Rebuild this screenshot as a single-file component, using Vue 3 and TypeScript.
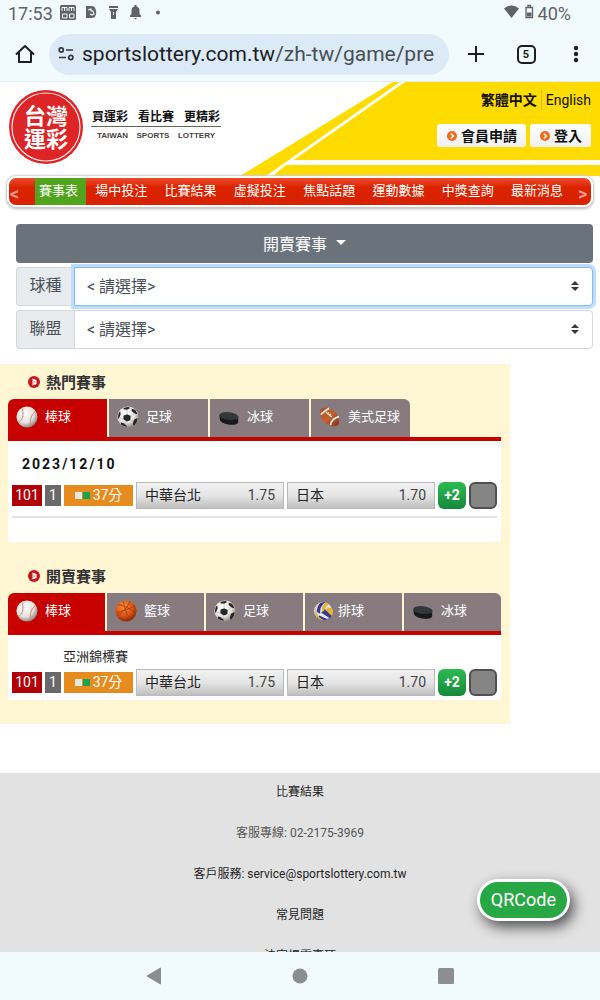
<script setup lang="ts">
import { ref } from 'vue'

interface Tab { icon: string; label: string }
interface Board { title: string; kind: string; date?: string; league?: string; tabs: Tab[] }

const menu = ['賽事表', '場中投注', '比賽結果', '虛擬投注', '焦點話題', '運動數據', '中獎查詢', '最新消息']
const sport = ref('')
const league = ref('')

const boards: Board[] = [
  {
    title: '熱門賽事',
    kind: 'hot',
    date: '2023/12/10',
    tabs: [
      { icon: 'baseball', label: '棒球' },
      { icon: 'soccer', label: '足球' },
      { icon: 'puck', label: '冰球' },
      { icon: 'football', label: '美式足球' },
    ],
  },
  {
    title: '開賣賽事',
    kind: 'open',
    league: '亞洲錦標賽',
    tabs: [
      { icon: 'baseball', label: '棒球' },
      { icon: 'basketball', label: '籃球' },
      { icon: 'soccer', label: '足球' },
      { icon: 'volleyball', label: '排球' },
      { icon: 'puck', label: '冰球' },
    ],
  },
]
const teams = [
  { name: '中華台北', odds: '1.75' },
  { name: '日本', odds: '1.70' },
]
</script>

<template>
  <div class="screen">
    <svg class="sprite" aria-hidden="true">
      <defs>
        <radialGradient id="g-white" cx="0.4" cy="0.35" r="0.65">
          <stop offset="0" stop-color="#fff" /><stop offset="0.65" stop-color="#e6e2dc" /><stop offset="1" stop-color="#8f8a88" />
        </radialGradient>
        <radialGradient id="g-orange" cx="0.4" cy="0.3" r="0.7">
          <stop offset="0" stop-color="#ff8a35" /><stop offset="0.6" stop-color="#df5312" /><stop offset="1" stop-color="#8a2c05" />
        </radialGradient>
        <linearGradient id="g-brown" x1="0" y1="0" x2="1" y2="1">
          <stop offset="0" stop-color="#a8522c" /><stop offset="0.5" stop-color="#c4602f" /><stop offset="1" stop-color="#82351a" />
        </linearGradient>
        <clipPath id="c-ball"><circle cx="12" cy="12" r="11" /></clipPath>
        <clipPath id="c-volley"><circle cx="12" cy="12" r="10" /></clipPath>
      </defs>
      <symbol id="baseball" viewBox="0 0 24 24">
        <circle cx="12" cy="12" r="11.500" fill="url(#g-white)" />
        <path d="M6.500 2.500C9 9 7 16 2.500 18M21.500 6C16.500 9 14.500 16 16.500 22" fill="none" stroke="#c8897f" stroke-width="1" />
        <path d="M6.500 5l2.500-.8M7 8l2.500-.2M6.500 11l2.500.6M5.200 14l2.300 1.200M17 9l1.800 1.800M15.500 12l2 1.200M14.800 15l2.200.8M14.800 18l2.200.3" stroke="#d9a59c" stroke-width="0.8" />
      </symbol>
      <symbol id="soccer" viewBox="0 0 24 24">
        <circle cx="12" cy="12" r="11.500" fill="url(#g-white)" />
        <g clip-path="url(#c-ball)">
          <path d="M7 10.500l4-1.500 4 2-.5 4.500-4 1.500-3.500-2.500zM7 1l6-1 1 2.500-3 1.500-4-.5zM16 3l4 1 2.500 5-3-.5-3.500-3zM1 8l2.500-2 .5 3-2 4.500-3 .5zM18.500 15l4-2-1 7-4 1.500v-3.500zM4.500 18l3 .8L11 22l-2 2-5-3z" fill="#25252a" />
          <path d="M11 9l0-5M15 11l4-3M14.500 15.500l4 1M10.500 17l-2 3M7 14.500l-5-1.500" stroke="#b5b5b5" stroke-width="0.7" />
        </g>
      </symbol>
      <symbol id="puck" viewBox="0 0 24 24">
        <path d="M1.500 9.500L2 15c1 5 18 8 20 3V11.500z" fill="#17191a" />
        <ellipse cx="12" cy="11" rx="10.500" ry="4.200" transform="rotate(7 12 11)" fill="#34373a" />
      </symbol>
      <symbol id="football" viewBox="0 0 24 24">
        <path d="M1.500 4c3-4 11-2.500 15 1.500s7 11.500 4.500 15.500c-5 2.500-12 .5-15.500-3.500S0 9 1.500 4z" fill="url(#g-brown)" />
        <path d="M2 9.500C3.500 8 6.500 5 11 2.500M12.500 21C13 16.500 17 12.500 21.800 11.500" fill="none" stroke="#f6eee9" stroke-width="1.900" />
        <path d="M7.500 6.500l6.500 5.500M9 9l2-2M11 10.500l2-2" stroke="#f3ddd2" stroke-width="1.200" />
      </symbol>
      <symbol id="basketball" viewBox="0 0 24 24">
        <circle cx="12" cy="12" r="11.500" fill="url(#g-orange)" />
        <path d="M1.500 14C8 12 18 9 21.500 6M9 1.500c1 7 4 15 8 20M3.500 5c6 1 14 5 19 9M2.500 17c5-3 12-9 13.500-15.500" fill="none" stroke="#8c3c12" stroke-width="0.8" />
      </symbol>
      <symbol id="volleyball" viewBox="0 0 24 24">
        <circle cx="11" cy="12" r="9.800" fill="#e8e8ee" />
        <g clip-path="url(#c-volley)">
          <path d="M8 3l6-1c-5 4-7 8-6 13l-4-2C4 9 6 5 8 3zM12 9l10 9-2 3-11-7zM7 17l9 4-7 2-5-4z" fill="#373992" />
          <path d="M14 3l5 1c-3 1-6 4-7 8l-2 1c-1-5 1-8 4-10zM16 8l5 1 2 6-2 3-7-7zM2 11l5 8 5 3-7 1-5-8z" fill="#e6b52c" />
          <path d="M4 5l3-2c-2 2-4 6-4 9l-2 1z" fill="#e6b52c" />
        </g>
      </symbol>
    </svg>

    <div class="status">
      <span>17:53</span>
      <svg class="tray" width="106" height="18" viewBox="0 0 106 18" aria-hidden="true">
        <rect x="0" y="2" width="16" height="15" rx="1.500" fill="#5f6365" />
        <path d="M2 8V4.500h5V8M4.500 4.500V8M9 8V4.500h5V8M11.500 4.500V8M2.500 11H7v4H2.500zM9.500 11H14v4H9.500z" fill="none" stroke="#f1fafd" stroke-width="1" />
        <path d="M26 3h6c5 0 6 12 0 12h-6z" fill="#5f6365" />
        <path d="M28 7l3-1v2h2l1 3-2 1-2-1" fill="none" stroke="#f1fafd" stroke-width="1.200" />
        <path d="M49 3h9v2h-9zM49 6h9l-2 3v7h-5V9z" fill="#5f6365" /><path d="M53.500 9v3" stroke="#f1fafd" />
        <path d="M70 14v-1.500l1.500-1.500V8c0-2.500 1-4 3-4.500V2h2v1.500c2 .5 3 2 3 4.500v3l1.500 1.500V14zM74 15h3l-1.500 1.500z" fill="#5f6365" />
        <circle cx="98" cy="9.500" r="2" fill="#5f6365" />
      </svg>
      <svg class="signal" width="30" height="18" viewBox="0 0 30 18" aria-hidden="true">
        <path d="M0 5.500Q7.500-.5 15 5.500L7.500 15z" fill="#5f6365" />
        <path d="M22 4.500h6.500v10H22zM24 2.500h2.500v2H24z" fill="none" stroke="#5f6365" stroke-width="1.300" /><path d="M23 9.500h4.500v4H23z" fill="#5f6365" />
      </svg>
      <span>40%</span>
    </div>

    <div class="browser">
      <button class="tool home" aria-label="首頁">
        <svg width="20" height="20" viewBox="0 0 20 20"><path d="M1 10.500L10 2l9 8.500M4 8.500V18h12V8.500" fill="none" stroke="#1b1f22" stroke-width="2" stroke-linejoin="round" /></svg>
      </button>
      <button class="address">
        <svg width="16" height="14" viewBox="0 0 16 14" aria-hidden="true"><g fill="none" stroke="#30373b" stroke-width="1.700"><circle cx="3.200" cy="3" r="2.100" /><path d="M8 3h7M1 10.500h7" /><circle cx="12.800" cy="10.500" r="2.100" /></g></svg>
        <span class="url">sportslottery.com.tw<i>/zh-tw/game/pre</i></span>
      </button>
      <button class="tool" aria-label="新增分頁">
        <svg width="18" height="18" viewBox="0 0 18 18"><path d="M9 1v16M1 9h16" stroke="#1b1f22" stroke-width="2" /></svg>
      </button>
      <button class="tool"><span class="count">5</span></button>
      <button class="tool dots" aria-label="選單">
        <svg width="6" height="18" viewBox="0 0 6 18"><g fill="#1b1f22"><circle cx="3" cy="3" r="2.200" /><circle cx="3" cy="9" r="2.200" /><circle cx="3" cy="15" r="2.200" /></g></svg>
      </button>
    </div>

    <main class="page">
      <header class="head">
        <svg class="banner" width="360" height="94" viewBox="240 0 360 94" aria-hidden="true">
          <path d="M240 94L393 0H600V94z" fill="#ffdc00" />
          <path d="M266 94L400 0H405L285 84Q279 88 273 94z" fill="#fff" />
          <path d="M292 78H600V83H284z" fill="#fff" />
        </svg>
        <a class="brand" href="#">
          <svg width="74" height="74" viewBox="0 0 74 74" role="img" aria-label="台灣運彩">
            <circle cx="37" cy="37" r="37" fill="#dd2427" />
            <circle cx="37" cy="37" r="34" fill="none" stroke="#fbe3e1" stroke-width="1.200" />
            <g class="seal"><text x="37" y="34">台灣</text><text x="37" y="57">運彩</text></g>
          </svg>
          <span class="motto">
            <span class="zh"><b>買運彩</b><b>看比賽</b><b>更精彩</b></span>
            <span class="en"><b>TAIWAN</b><b>SPORTS</b><b>LOTTERY</b></span>
          </span>
        </a>
        <div class="account">
          <div class="lang"><a class="now" href="#">繁體中文</a><a href="#">English</a></div>
          <div class="entry">
            <button v-for="t in ['會員申請', '登入']" :key="t">
              <svg width="10" height="10" viewBox="0 0 10 10" aria-hidden="true"><circle cx="5" cy="5" r="5" fill="#f26a1b" /><path d="M3.800 2.500L6.300 5 3.800 7.500" fill="none" stroke="#fff" stroke-width="1.500" /></svg>{{ t }}
            </button>
          </div>
        </div>
      </header>

      <nav class="menu">
        <button class="arrow">&lt;</button>
        <div class="links">
          <a v-for="(m, i) in menu" :key="m" href="#" :class="{ on: i === 0 }">{{ m }}</a>
        </div>
        <button class="arrow end">&gt;</button>
      </nav>

      <section class="filter">
        <button class="drop">開賣賽事<span class="tri"></span></button>
        <div class="group">
          <label for="sport">球種</label>
          <div class="pick focus">
            <select id="sport" v-model="sport"><option value="">&lt; 請選擇&gt;</option></select>
            <svg width="8" height="10" viewBox="0 0 8 10" aria-hidden="true"><path d="M4 0l4 4H0zM4 10l4-4H0z" fill="#343a40" /></svg>
          </div>
        </div>
        <div class="group">
          <label for="league">聯盟</label>
          <div class="pick">
            <select id="league" v-model="league"><option value="">&lt; 請選擇&gt;</option></select>
            <svg width="8" height="10" viewBox="0 0 8 10" aria-hidden="true"><path d="M4 0l4 4H0zM4 10l4-4H0z" fill="#343a40" /></svg>
          </div>
        </div>
      </section>

      <div class="boards">
        <section v-for="b in boards" :key="b.kind" class="board" :class="b.kind">
          <h2>
            <svg width="12" height="12" viewBox="0 0 12 12" aria-hidden="true"><circle cx="6" cy="6" r="6" fill="#c8161d" /><path d="M4.500 2.500L8.500 4v4l-4 1.500z" fill="#fff" /><path d="M5.500 4.500L7.500 6l-2 1.500z" fill="#e88" /></svg>{{ b.title }}
          </h2>
          <div class="tabs">
            <button v-for="(t, i) in b.tabs" :key="t.label" :class="[t.icon, { on: i === 0 }]">
              <svg aria-hidden="true"><use :href="'#' + t.icon" /></svg>{{ t.label }}
            </button>
          </div>
          <div class="panel">
            <h3 v-if="b.date">{{ b.date }}</h3>
            <p v-if="b.league" class="league">{{ b.league }}</p>
            <div class="match">
              <span class="no">101</span>
              <span class="min">1</span>
              <span class="time"><i></i><i class="green"></i>37分</span>
              <button v-for="t in teams" :key="t.name" class="odds"><span>{{ t.name }}</span><span class="val">{{ t.odds }}</span></button>
              <button class="more">+2</button>
              <button class="info" aria-label="資訊"></button>
            </div>
          </div>
        </section>
      </div>

      <footer class="foot">
        <a href="#">比賽結果</a>
        <p>客服專線: 02-2175-3969</p>
        <a href="#">客戶服務: service@sportslottery.com.tw</a>
        <a href="#">常見問題</a>
        <a href="#">法定揭露事項</a>
      </footer>
      <button class="qr">QRCode</button>
    </main>

    <div class="keys">
      <button aria-label="返回"><svg width="16" height="18" viewBox="0 0 16 18"><path d="M14.500 1v16L1 9z" fill="#8b8f90" stroke="#8b8f90" stroke-linejoin="round" /></svg></button>
      <button aria-label="主畫面"><svg width="16" height="16" viewBox="0 0 16 16"><circle cx="8" cy="8" r="7.500" fill="#8b8f90" /></svg></button>
      <button aria-label="最近使用"><svg width="16" height="16" viewBox="0 0 16 16"><rect width="16" height="16" rx="1.500" fill="#8b8f90" /></svg></button>
    </div>
  </div>
</template>

<style>
body { margin: 0; background: #fff; }
</style>

<style scoped>
* { box-sizing: border-box; }
.screen {
  display: flex;
  flex-direction: column;
  height: 100vh;
  overflow: hidden;
  background: #f1fafd;
  color: #222;
  font-family: Roboto, "Noto Sans CJK TC", sans-serif;
}
.sprite { position: absolute; width: 0; height: 0; }
svg { display: block; flex: none; }
button { padding: 0; border: 0; background: none; color: inherit; font: inherit; cursor: pointer; }
a { color: inherit; text-decoration: none; }
h2, h3, p { margin: 0; }

.status {
  display: flex;
  align-items: center;
  flex: none;
  height: 27px;
  padding: 0 29px 0 8px;
  color: #5f6365;
  font-size: 18px;
  line-height: 27px;
}
.tray { margin-left: 7px; margin-bottom: 4px; }
.signal { margin: 0 4px 4px auto; }

.browser {
  display: flex;
  align-items: center;
  flex: none;
  height: 54px;
}
.tool { display: flex; align-items: center; justify-content: center; width: 50px; height: 40px; }
.home { width: 49px; }
.dots { width: 49px; }
.address {
  display: flex;
  align-items: center;
  flex: 1;
  min-width: 0;
  gap: 8px;
  height: 41px;
  margin-right: 2px;
  padding-left: 9px;
  border-radius: 21px;
  background: #dceaf8;
}
.url { color: #1b2023; font-size: 21px; line-height: 40px; white-space: nowrap; }
.url i { color: #465055; font-style: normal; }
.count {
  width: 19px;
  height: 19px;
  border: 2px solid #1b1f22;
  border-radius: 5px;
  color: #1b1f22;
  font-size: 11px;
  font-weight: 700;
  line-height: 15px;
  text-align: center;
}

.page { position: relative; flex: 1; min-height: 0; overflow: hidden; border-top: 1px solid #e3eef0; background: #fff; }
.head { position: relative; display: flex; justify-content: space-between; height: 94px; padding: 8px 9px 0 9px; }
.banner { position: absolute; top: 0; right: 0; }
.brand { position: relative; display: flex; gap: 8px; }
.seal { fill: #fff; font-family: "Noto Sans CJK TC", sans-serif; font-size: 22px; font-weight: 700; text-anchor: middle; }
.motto { width: 130px; padding-top: 18px; }
.zh, .en { display: flex; justify-content: space-between; }
.zh { padding: 0 1px; border-bottom: 1px solid #665; color: #111; font-size: 12px; line-height: 18px; }
.en { padding: 0 6px; color: #444; font-family: "Liberation Sans", sans-serif; font-size: 8px; line-height: 17px; }
.account { position: relative; display: flex; flex-direction: column; align-items: flex-end; color: #111; }
.lang { display: flex; font-size: 14px; line-height: 20px; }
.now { margin-right: 4px; padding-right: 4px; border-right: 1px solid #d6bd4c; font-weight: 700; }
.entry { display: flex; gap: 4px; margin-top: 14px; }
.entry button {
  display: flex;
  align-items: center;
  gap: 4px;
  height: 23px;
  padding: 0 9px 0 10px;
  border-radius: 3px;
  background: linear-gradient(#fff, #f0f0f0);
  font-size: 14px;
  font-weight: 700;
  line-height: 22px;
}

.menu {
  position: relative;
  display: flex;
  height: 31px;
  margin: 0 7px;
  border: 2px solid #fff;
  border-radius: 9px;
  background: linear-gradient(#ee4a2c, #da2400 35%, #d82200);
  box-shadow: 0 0 2px 1px #ccc, 0 2px 3px #bbb;
  color: #fff;
  font-size: 13px;
  line-height: 26px;
}
.links { display: flex; flex: 1; justify-content: space-between; }
.menu a { padding: 0 8px 0 4px; white-space: nowrap; }
.menu a.on { background: #51a51c; }
.arrow { width: 26px; padding: 4px 0 0 1px; color: #ef9686; font-size: 18px; font-weight: 700; line-height: 22px; text-align: left; }
.arrow.end { width: 20px; padding-left: 7px; }

.filter { display: flex; flex-direction: column; gap: 4px; padding: 17px 7px 0 16px; color: #495057; font-size: 16px; }
.drop {
  display: flex;
  align-items: center;
  justify-content: center;
  height: 39px;
  padding-bottom: 2px;
  border-radius: 4px;
  background: #6a737b;
  color: #fff;
}
.tri { margin-left: 9px; border: 5px solid transparent; border-top-color: #fff; border-bottom: 0; }
.group { display: flex; height: 39px; }
.group label {
  width: 58px;
  border: 1px solid #d3d8dc;
  border-right: 0;
  border-radius: 4px 0 0 4px;
  background: #e9ecef;
  line-height: 36px;
  text-align: center;
}
.pick {
  display: flex;
  align-items: center;
  flex: 1;
  padding: 0 13px 1px 0;
  border: 1px solid #d3d8dc;
  border-radius: 0 4px 4px 0;
  background: #fff;
}
.focus { border-color: #80bdff; box-shadow: 0 0 0 3px #bfdeff; }
.pick select {
  flex: 1;
  min-width: 0;
  height: 36px;
  padding: 0 12px;
  border: 0;
  outline: 0;
  background: transparent;
  color: inherit;
  font: inherit;
  appearance: none;
}

.boards { width: 85%; margin-top: 15px; padding: 0 9px 24px 8px; background: #fff6d3; }
.board h2 { display: flex; align-items: center; gap: 6px; height: 35px; padding-left: 20px; color: #333; font-size: 15px; }
.board.open { padding-top: 16px; }
.tabs { display: flex; gap: 2px; height: 42px; border-bottom: 4px solid #c70000; }
.tabs button {
  display: flex;
  align-items: center;
  flex: 1;
  gap: 7px;
  padding: 0 0 2px 8px;
  background: #877b80;
  color: #fff;
  font-size: 13px;
  line-height: 20px;
}
.hot .tabs button { flex: 0 0 99px; }
.tabs button:first-child { border-top-left-radius: 6px; }
.tabs button:last-child { border-top-right-radius: 6px; }
.tabs .on { background: #c70000; }
.tabs svg { width: 22px; height: 22px; }
.tabs .volleyball { gap: 3px; }
.panel { background: #fff; }
.hot .panel { padding: 13px 4px 24px; }
.open .panel { padding: 11px 4px 4px; }
.panel h3 { height: 28px; padding-left: 10px; color: #111; font-size: 14px; line-height: 20px; letter-spacing: 2px; }
.league { padding-left: 51px; font-size: 13px; line-height: 22px; height: 23px; }
.match {
  display: grid;
  grid-template-columns: 30px 16px 69px 1fr 1fr 28px 28px;
  align-items: center;
  gap: 3px;
  font-size: 14px;
  line-height: 21px;
}
.hot .match { padding-bottom: 7px; border-bottom: 2px solid #e2e2e2; }
.no, .min, .time { height: 21px; color: #fff; text-align: center; }
.no { background: #b10006; }
.min { background: #696969; }
.time { display: flex; align-items: center; justify-content: center; background: #e68b1d; }
.time i { width: 7px; height: 7px; margin-right: 1px; background: #e7e7e0; }
.time .green { margin-right: 3px; background: #14a552; }
.odds {
  display: flex;
  align-items: center;
  justify-content: space-between;
  height: 27px;
  padding: 0 8px;
  border: 1px solid #bababa;
  background: linear-gradient(#f1f1f1, #e5e5e5 50%, #bfbfbf);
}
.val { color: #444; }
.more { height: 27px; border-radius: 6px; background: linear-gradient(#2cbb51, #16883a); color: #fff; font-weight: 700; }
.info { height: 27px; border: 2px solid #505050; border-radius: 6px; background: #858585; }

.foot {
  display: flex;
  flex-direction: column;
  align-items: center;
  height: 240px;
  margin-top: 49px;
  padding-top: 9px;
  gap: 21px;
  background: #e2e2e2;
  color: #222;
  font-size: 12px;
  line-height: 20px;
}
.foot p { color: #555; }
.qr {
  position: absolute;
  right: 30px;
  bottom: 31px;
  height: 42px;
  padding: 0 11px 2px;
  border: 3px solid #fff;
  border-radius: 21px;
  background: #28a745;
  box-shadow: 4px 6px 14px rgba(0, 0, 0, 0.65);
  color: #fff;
  font-size: 18px;
}

.keys { display: flex; flex: none; justify-content: center; height: 48px; }
.keys button { display: flex; align-items: center; justify-content: center; width: 146px; }
</style>
